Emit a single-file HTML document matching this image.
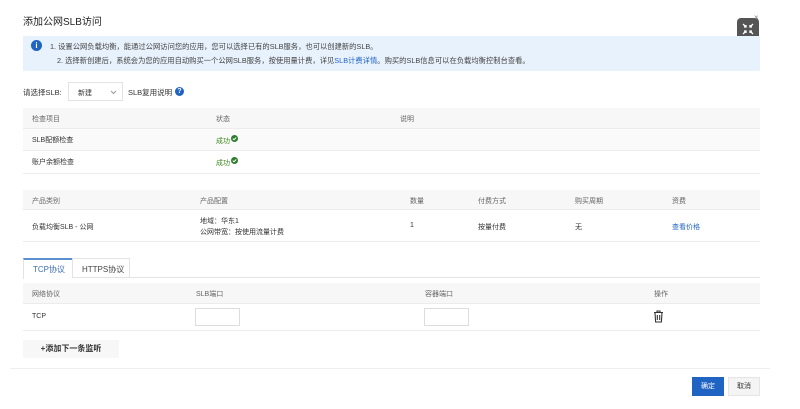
<!DOCTYPE html>
<html><head><meta charset="utf-8"><style>
*{margin:0;padding:0;box-sizing:border-box}
body{width:800px;height:409px;background:#fff;font-family:"Liberation Sans","Noto Sans CJK SC",sans-serif;color:#333;position:relative;overflow:hidden;font-size:7px}
.a{position:absolute;white-space:nowrap}
.hd{position:absolute;left:23px;width:737px;background:#f7f7f7;border-bottom:1px solid #ececec}
.ln{position:absolute;left:23px;width:737px;border-bottom:1px solid #ececec}
.g{color:#666}
.inp{position:absolute;width:45px;height:18px;border:1px solid #ddd;background:#fff}
.ok{color:#3c8a1e}
.ok svg{vertical-align:1px;margin-left:1px}
</style></head><body>
<div class="a" style="left:23px;top:13px;font-size:10px;color:#222">添加公网SLB访问</div>
<div class="a" style="left:737px;top:18px;width:22px;height:22px;background:#555;border-radius:4px">
<svg width="22" height="22" viewBox="0 0 22 22"><g stroke="#fff" stroke-width="1.3" fill="none"><path d="M6 6l3 3M16 6l-3 3M6 16l3-3M16 16l-3-3"/><path d="M9 7v2H7M13 7v2h2M9 15v-2H7M13 15v-2h2"/></g></svg></div>
<div class="a" style="left:754px;top:13px;font-size:8px;color:#888">×</div>
<div class="a" style="left:23px;top:36px;width:737px;height:35px;background:#e8f2fd"></div>
<div class="a" style="left:31px;top:40px;width:11px;height:11px;border-radius:50%;background:#1f64c3;color:#fff;font-size:8px;font-weight:bold;text-align:center;line-height:11px">i</div>
<div class="a" style="left:50px;top:42px;font-size:7.3px;color:#444">1. 设置公网负载均衡，能通过公网访问您的应用，您可以选择已有的SLB服务，也可以创建新的SLB。</div>
<div class="a" style="left:57px;top:56px;font-size:7.3px;color:#444">2. 选择新创建后，系统会为您的应用自动购买一个公网SLB服务，按使用量计费，详见<span style="color:#1f64c3">SLB计费详情</span>。购买的SLB信息可以在负载均衡控制台查看。</div>
<div class="a" style="left:23px;top:87px;font-size:7.5px">请选择SLB:</div>
<div class="a" style="left:68px;top:82px;width:55px;height:19px;border:1px solid #e3e3e3;font-size:7px;padding:5px 0 0 9px">新建<svg style="position:absolute;left:41px;top:7px" width="7" height="5" viewBox="0 0 7 5"><path d="M1 1l2.5 2.5L6 1" stroke="#999" fill="none"/></svg></div>
<div class="a" style="left:128px;top:87px;font-size:7.5px">SLB复用说明</div>
<div class="a" style="left:175px;top:87px;width:9px;height:9px;border-radius:50%;background:#1f64c3;color:#fff;font-size:7px;font-weight:bold;text-align:center;line-height:9px">?</div>

<div class="hd" style="top:108px;height:21px"></div>
<div class="a g" style="left:32px;top:114px">检查项目</div>
<div class="a g" style="left:216px;top:114px">状态</div>
<div class="a g" style="left:400px;top:114px">说明</div>
<div class="ln" style="top:129px;height:22px;background:#fafafa"></div>
<div class="a" style="left:32px;top:135px">SLB配额检查</div>
<div class="a ok" style="left:216px;top:135px">成功<svg width="7" height="7" viewBox="0 0 7 7"><circle cx="3.5" cy="3.5" r="3.5" fill="#2e7d2e"/><path d="M1.8 3.6l1.2 1.1 2.2-2.2" stroke="#fff" stroke-width="1" fill="none"/></svg></div>
<div class="ln" style="top:151px;height:23px"></div>
<div class="a" style="left:32px;top:157px">账户余额检查</div>
<div class="a ok" style="left:216px;top:157px">成功<svg width="7" height="7" viewBox="0 0 7 7"><circle cx="3.5" cy="3.5" r="3.5" fill="#2e7d2e"/><path d="M1.8 3.6l1.2 1.1 2.2-2.2" stroke="#fff" stroke-width="1" fill="none"/></svg></div>

<div class="hd" style="top:190px;height:20px"></div>
<div class="a g" style="left:32px;top:196px">产品类别</div>
<div class="a g" style="left:200px;top:196px">产品配置</div>
<div class="a g" style="left:410px;top:196px">数量</div>
<div class="a g" style="left:478px;top:196px">付费方式</div>
<div class="a g" style="left:575px;top:196px">购买周期</div>
<div class="a g" style="left:672px;top:196px">资费</div>
<div class="ln" style="top:210px;height:32px"></div>
<div class="a" style="left:32px;top:222px">负载均衡SLB - 公网</div>
<div class="a" style="left:200px;top:216px">地域：华东1</div>
<div class="a" style="left:200px;top:227px">公网带宽：按使用流量计费</div>
<div class="a" style="left:410px;top:222px">1</div>
<div class="a" style="left:478px;top:222px">按量付费</div>
<div class="a" style="left:575px;top:222px">无</div>
<div class="a" style="left:672px;top:222px;color:#1f64c3">查看价格</div>

<div class="ln" style="top:258px;height:20px;border-bottom:1px solid #e3e3e3"></div>
<div class="a" style="left:23px;top:258px;width:49px;height:21px;background:#fff;border-top:2px solid #5a8fd0;border-left:1px solid #e3e3e3;font-size:8px;color:#3a6fb5;padding:4px 0 0 9px">TCP协议</div>
<div class="a" style="left:72px;top:258px;width:58px;height:20px;border:1px solid #e3e3e3;border-bottom:none;font-size:8px;color:#444;padding:5px 0 0 9px">HTTPS协议</div>

<div class="hd" style="top:283px;height:21px"></div>
<div class="a g" style="left:32px;top:289px">网络协议</div>
<div class="a g" style="left:196px;top:289px">SLB端口</div>
<div class="a g" style="left:425px;top:289px">容器端口</div>
<div class="a g" style="left:654px;top:289px">操作</div>
<div class="ln" style="top:304px;height:27px"></div>
<div class="a" style="left:32px;top:313px">TCP</div>
<div class="inp" style="left:195px;top:308px"></div>
<div class="inp" style="left:424px;top:308px"></div>
<svg class="a" style="left:653px;top:310px" width="11" height="13" viewBox="0 0 11 13"><g fill="none" stroke="#333" stroke-width="1.1"><path d="M1 2.5h9M4 2.5V1h3v1.5M2 2.5l.6 9.5h5.8l.6-9.5M4.3 5v5M6.7 5v5"/></g></svg>

<div class="a" style="left:23px;top:340px;width:96px;height:18px;background:#f7f7f7;font-size:8px;font-weight:bold;text-align:center;line-height:18px;color:#333">+添加下一条监听</div>
<div class="a" style="left:10px;top:368px;width:760px;border-top:1px solid #eee"></div>
<div class="a" style="left:692px;top:377px;width:32px;height:19px;background:#1f64c3;color:#fff;text-align:center;line-height:19px">确定</div>
<div class="a" style="left:728px;top:377px;width:32px;height:19px;background:#f4f4f4;border:1px solid #e5e5e5;color:#333;text-align:center;line-height:17px">取消</div>
</body></html>
